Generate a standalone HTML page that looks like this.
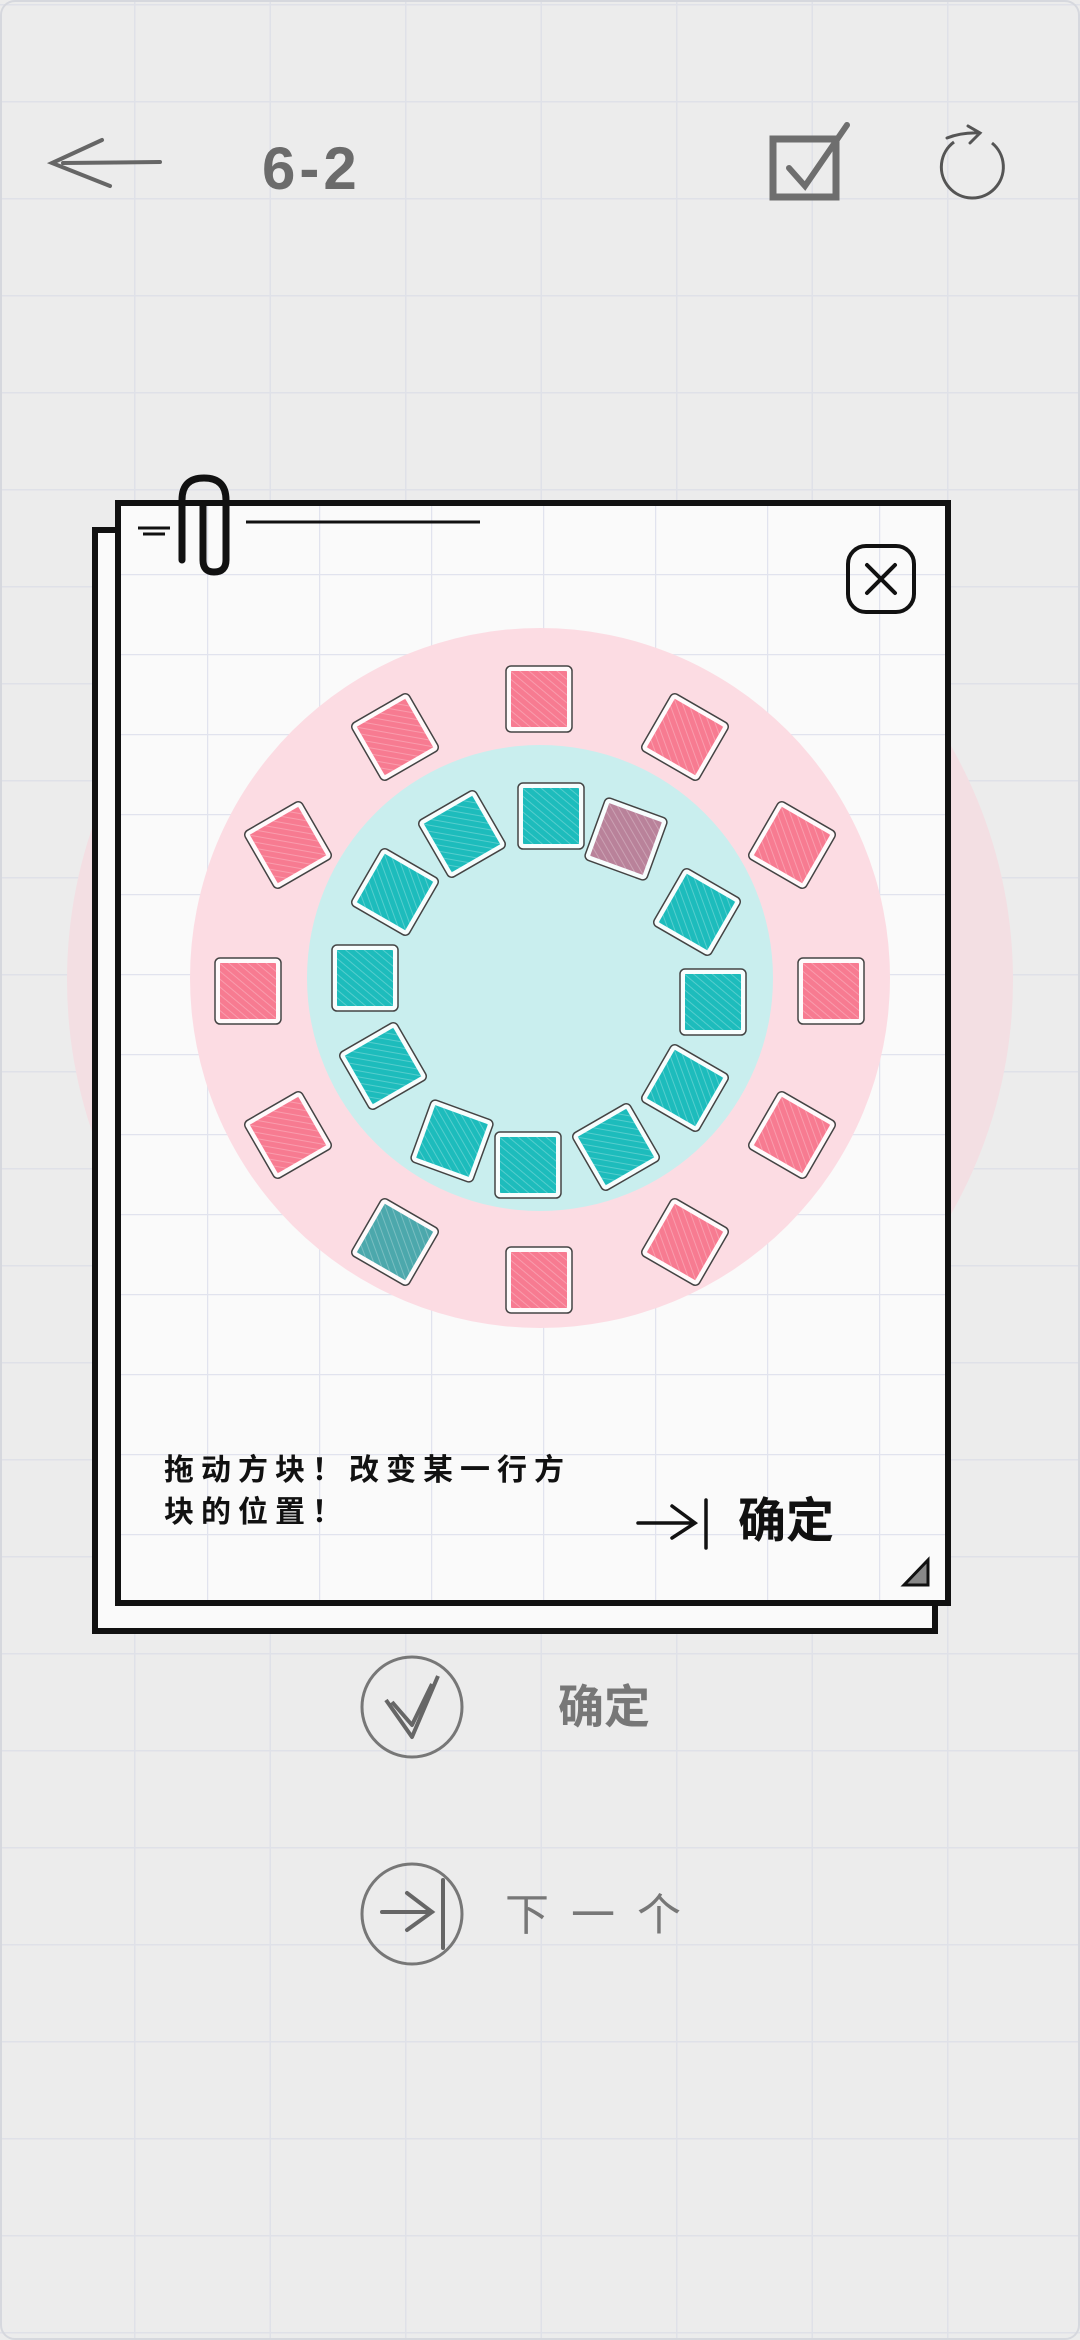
<!DOCTYPE html>
<html><head><meta charset="utf-8"><style>
html,body{margin:0;padding:0;background:#ececec;}
svg{display:block}
text{font-family:"Liberation Sans","Noto Sans CJK SC",sans-serif;}
</style></head><body>
<svg width="1080" height="2340" viewBox="0 0 1080 2340" xmlns="http://www.w3.org/2000/svg">
<defs>
<pattern id="bg" x="134" y="101" width="135.5" height="97" patternUnits="userSpaceOnUse">
<rect width="135.5" height="97" fill="#ececec"/>
<path d="M0 0V97M0 0H135.5" stroke="#dfe1e8" stroke-width="3"/>
</pattern>
<pattern id="dg" x="207" y="574" width="112" height="80" patternUnits="userSpaceOnUse">
<rect width="112" height="80" fill="#fafafa"/>
<path d="M0 0V80M0 0H112" stroke="#e1e3ee" stroke-width="2.5"/>
</pattern>
<pattern id="hatch" width="6" height="6" patternUnits="userSpaceOnUse" patternTransform="rotate(40)">
<path d="M0 3H6" stroke="#ffffff" stroke-opacity="0.25" stroke-width="1"/>
</pattern>
<g id="tp"><rect x="-33" y="-33" width="66" height="66" rx="5" fill="#fff" fill-opacity="0.85" stroke="#444" stroke-width="1.5"/><rect x="-28" y="-28" width="56" height="56" fill="#f77b91"/><rect x="-28" y="-28" width="56" height="56" fill="url(#hatch)"/></g>
<g id="tt"><rect x="-33" y="-33" width="66" height="66" rx="5" fill="#fff" fill-opacity="0.85" stroke="#444" stroke-width="1.5"/><rect x="-28" y="-28" width="56" height="56" fill="#1dbcbc"/><rect x="-28" y="-28" width="56" height="56" fill="url(#hatch)"/></g>
<g id="tq"><rect x="-33" y="-33" width="66" height="66" rx="5" fill="#fff" fill-opacity="0.85" stroke="#444" stroke-width="1.5"/><rect x="-28" y="-28" width="56" height="56" fill="#4ca8ac"/><rect x="-28" y="-28" width="56" height="56" fill="url(#hatch)"/></g>
<g id="tv"><rect x="-33" y="-33" width="66" height="66" rx="5" fill="#fff" fill-opacity="0.85" stroke="#444" stroke-width="1.5"/><rect x="-28" y="-28" width="56" height="56" fill="#b9829a"/><rect x="-28" y="-28" width="56" height="56" fill="url(#hatch)"/></g>
</defs>
<rect width="1080" height="2340" fill="url(#bg)"/>
<rect x="1" y="1" width="1078" height="2338" rx="14" fill="none" stroke="#d6d8de" stroke-width="2"/>

<!-- top bar -->
<path d="M102 140 L52 163 L110 186 M63 163 L160 162" fill="none" stroke="#666" stroke-width="4" stroke-linecap="round"/>
<text x="262" y="189" font-size="60" fill="#6b6b6b" font-weight="bold" letter-spacing="4">6-2</text>
<rect x="773" y="139" width="63" height="58" fill="none" stroke="#6e6e6e" stroke-width="7"/>
<path d="M789 168 L805 186 L847 125" fill="none" stroke="#6e6e6e" stroke-width="6" stroke-linecap="round"/>
<path d="M992 143 A31 31 0 1 1 954 142" fill="none" stroke="#555" stroke-width="3"/>
<path d="M947 138 Q962 132 980 133 M968 126 L980 133 L970 143" fill="none" stroke="#555" stroke-width="3" stroke-linecap="round"/>

<!-- big faint circle -->
<circle cx="540" cy="980" r="473" fill="#f3dfe3"/>

<!-- back sheet -->
<rect x="95" y="530" width="840" height="1101" fill="#fafafa" stroke="#111" stroke-width="6"/>
<!-- front sheet -->
<rect x="118" y="503" width="830" height="1100" fill="url(#dg)"/>
<path d="M118 503 H948 V1603 H118 Z" fill="none" stroke="#111" stroke-width="6"/>
<!-- paper clip -->
<path d="M182 560 V500 Q182 478 204 478 Q226 478 226 500 V560 Q226 572 214 572 Q203 572 203 560 V505" fill="none" stroke="#111" stroke-width="7" stroke-linecap="round"/>
<path d="M138 528 H170 M143 534 H165 M246 522 H480" stroke="#111" stroke-width="3"/>
<!-- close -->
<rect x="848" y="546" width="66" height="66" rx="18" fill="none" stroke="#111" stroke-width="4"/>
<path d="M867 565 L895 593 M895 565 L867 593" stroke="#111" stroke-width="4" stroke-linecap="round"/>

<!-- rings -->
<circle cx="540" cy="978" r="350" fill="#fcdce3"/>
<circle cx="540" cy="978" r="233" fill="#c9eeee"/>

<use href="#tp" transform="translate(539 699)"/>
<use href="#tp" transform="translate(685 737) rotate(30)"/>
<use href="#tp" transform="translate(792 845) rotate(30)"/>
<use href="#tp" transform="translate(831 991)"/>
<use href="#tp" transform="translate(792 1135) rotate(30)"/>
<use href="#tp" transform="translate(685 1242) rotate(30)"/>
<use href="#tp" transform="translate(539 1280)"/>
<use href="#tq" transform="translate(395 1242) rotate(30)"/>
<use href="#tp" transform="translate(288 1135) rotate(-30)"/>
<use href="#tp" transform="translate(248 991)"/>
<use href="#tp" transform="translate(288 845) rotate(-30)"/>
<use href="#tp" transform="translate(395 737) rotate(-30)"/>

<use href="#tt" transform="translate(551 816)"/>
<use href="#tv" transform="translate(626 839) rotate(20)"/>
<use href="#tt" transform="translate(697 912) rotate(30)"/>
<use href="#tt" transform="translate(713 1002)"/>
<use href="#tt" transform="translate(685 1088) rotate(30)"/>
<use href="#tt" transform="translate(616 1147) rotate(-30)"/>
<use href="#tt" transform="translate(528 1165)"/>
<use href="#tt" transform="translate(452 1141) rotate(20)"/>
<use href="#tt" transform="translate(383 1066) rotate(-30)"/>
<use href="#tt" transform="translate(365 978)"/>
<use href="#tt" transform="translate(395 892) rotate(30)"/>
<use href="#tt" transform="translate(462 834) rotate(-30)"/>

<!-- dialog text -->
<text x="164" y="1480" font-size="30" fill="#111" font-weight="bold" letter-spacing="7">拖动方块！改变某一行方</text>
<text x="164" y="1522" font-size="30" fill="#111" font-weight="bold" letter-spacing="7">块的位置！</text>
<path d="M638 1523 H695 M672 1506 L695 1523 L672 1538 M706 1500 V1548" fill="none" stroke="#111" stroke-width="3.5" stroke-linecap="round"/>
<text x="738" y="1537" font-size="48" fill="#111" font-weight="bold">确定</text>
<path d="M904 1585 L928 1560 L928 1585 Z" fill="#888" stroke="#111" stroke-width="3"/>

<!-- buttons -->
<circle cx="412" cy="1707" r="50" fill="none" stroke="#777" stroke-width="3"/>
<path d="M386 1700 L412 1737 L438 1676 M392 1702 L412 1725 L432 1684" fill="none" stroke="#666" stroke-width="4" stroke-linejoin="round"/>
<text x="558" y="1723" font-size="46" fill="#777" font-weight="bold">确定</text>
<circle cx="412" cy="1914" r="50" fill="none" stroke="#777" stroke-width="3"/>
<path d="M382 1912 H432 M407 1893 L432 1912 L407 1930 M443 1880 V1948" fill="none" stroke="#666" stroke-width="4" stroke-linecap="round"/>
<text x="505" y="1930" font-size="44" fill="#777" letter-spacing="22">下一个</text>
</svg>
</body></html>
